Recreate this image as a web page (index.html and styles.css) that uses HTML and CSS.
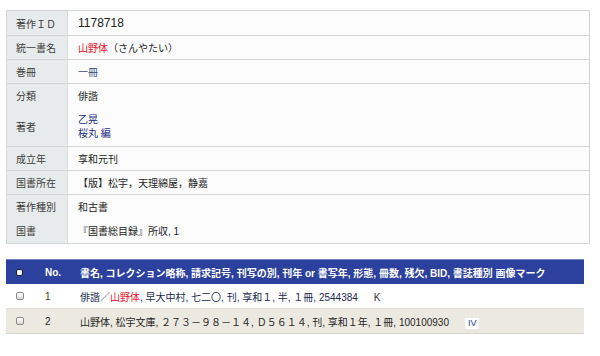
FILE: index.html
```html
<!DOCTYPE html>
<html lang="ja">
<head>
<meta charset="utf-8">
<link rel="stylesheet" href="styles.css">
</head>
<body>
<div class="info">
  <div class="row"><div class="lab">著作ＩＤ</div><div class="val"><span class="n">1178718</span></div></div>
  <div class="row line"><div class="lab">統一書名</div><div class="val"><span class="red">山野体</span>（さんやたい）</div></div>
  <div class="row line"><div class="lab">巻冊</div><div class="val link2">一冊</div></div>
  <div class="row line"><div class="lab">分類</div><div class="val">俳諧</div></div>
  <div class="row tall"><div class="lab">著者</div><div class="val col"><span class="link">乙晃</span><span class="link">桜丸 編</span></div></div>
  <div class="row line"><div class="lab">成立年</div><div class="val">享和元刊</div></div>
  <div class="row line"><div class="lab">国書所在</div><div class="val">【版】松宇，天理綿屋，静嘉</div></div>
  <div class="row line"><div class="lab">著作種別</div><div class="val">和古書</div></div>
  <div class="row last"><div class="lab">国書</div><div class="val">『国書総目録』所収, 1</div></div>
</div>

<div class="list">
  <div class="lrow head">
    <div class="c1"><span class="cb cb-head"></span></div>
    <div class="c2">No.</div>
    <div class="c3">書名, コレクション略称, 請求記号, 刊写の別, 刊年 or 書写年, 形態, 冊数, 残欠, BID, 書誌種別 画像マーク</div>
  </div>
  <div class="lrow">
    <div class="c1"><span class="cb"></span></div>
    <div class="c2 no1">1</div>
    <div class="c3 navy">俳諧／<span class="red">山野体</span>, 早大中村, 七二〇, 刊, 享和１, 半, １冊, 2544384<span class="k">K</span></div>
  </div>
  <div class="lrow alt">
    <div class="c1"><span class="cb"></span></div>
    <div class="c2">2</div>
    <div class="c3">山野体, 松宇文庫, ２７３－９８－１４, Ｄ５６１４, 刊, 享和１年, １冊, 100100930<span class="iv">IV</span></div>
  </div>
</div>
</body>
</html>
```

FILE: styles.css
```css
* { box-sizing: border-box; }
html, body { margin: 0; padding: 0; background: #ffffff; }
body {
  font-family: "Liberation Sans", "Noto Sans CJK JP", sans-serif;
  font-size: 10px;
  color: #262626;
  width: 600px;
  height: 356px;
  overflow: hidden;
}

.info {
  margin: 10px 0 0 6px;
  width: 584px;
  border: 1px solid #d3d6d6;
  background: #fbfcfb;
}
.row {
  display: grid;
  grid-template-columns: 61px 1fr;
  min-height: 24px;
}
.row.line { border-top: 1px solid #d3d6d6; }
.row.tall { min-height: 39px; }
.row.last { min-height: 25px; }
.lab {
  background: #e8ebeb;
  border-right: 1px solid #d9dddd;
  padding: 0 0 0 9px;
  display: flex;
  align-items: center;
  color: #3c3c3c;
}
.val {
  padding: 0 10px;
  display: flex;
  align-items: center;
  color: #242424;
}
.val.col {
  flex-direction: column;
  align-items: flex-start;
  justify-content: center;
  line-height: 14px;
}
.n { font-size: 12px; }
.red { color: #e8102a; }
.link { color: #1f2f88; }
.link2 { color: #3a4a80; }

.list {
  margin: 15px 0 0 6px;
  width: 578px;
}
.lrow {
  display: grid;
  grid-template-columns: 33px 35px 1fr;
  height: 25px;
  align-items: center;
  border-bottom: 1px solid #e2e2dc;
  background: #ffffff;
}
.lrow.head {
  background: #2c419e;
  border-top: 1px solid #7083c9;
  border-bottom: none;
  color: #ffffff;
  font-weight: bold;
}
.lrow.alt { background: #ece9e0; border-bottom: 1px solid #d6d6d0; }
.c1 { padding-left: 10px; display: flex; align-items: center; }
.c2 { padding-left: 6px; }
.c3 { padding-left: 6px; white-space: nowrap; }
.no1 { color: #5a2a2a; }
.navy { color: #22284f; }
.cb {
  display: block;
  width: 8px;
  height: 8px;
  border: 1px solid #8a8a8a;
  border-radius: 2px;
  background: linear-gradient(#ffffff, #d8d8d8);
}
.cb.cb-head {
  width: 7px;
  height: 7px;
  border-color: #1a1f40;
  background: #f4f4f8;
}
.k { margin-left: 16px; color: #333; }
.iv {
  display: inline-block;
  margin-left: 16px;
  background: #ffffff;
  color: #203a9a;
  padding: 0 3px;
  line-height: 11px;
  font-size: 9px;
}
```
